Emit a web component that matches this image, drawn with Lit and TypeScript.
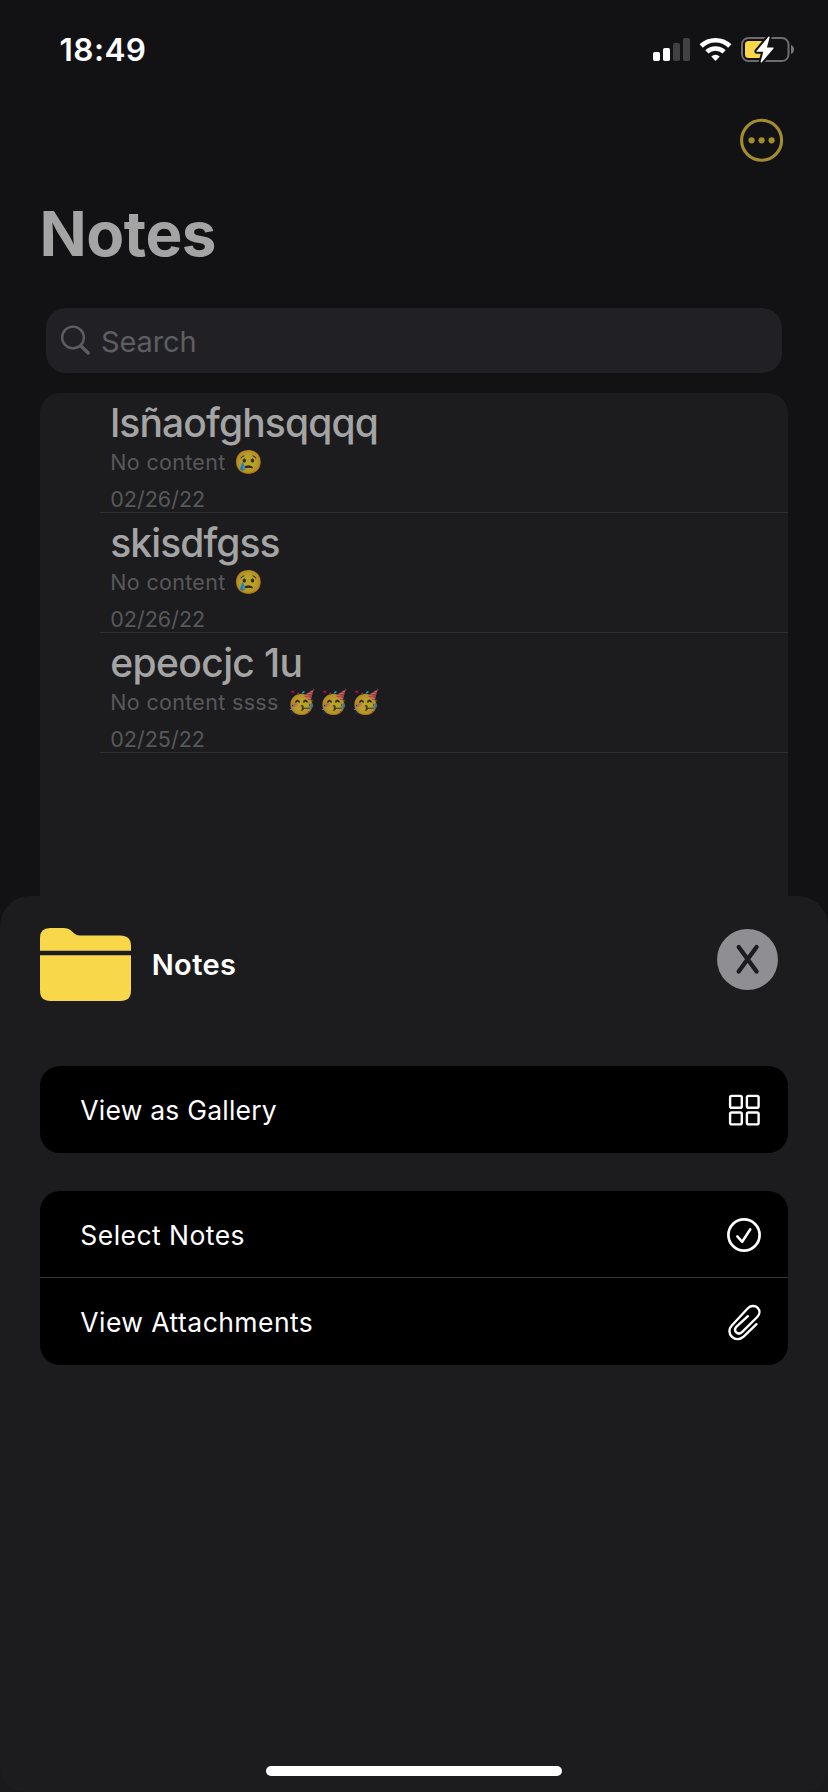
import { LitElement, html, css, svg } from "lit";
import { customElement } from "lit/decorators.js";

interface Note {
  title: string;
  spacing: number;
  content: string;
  emoji: string[];
  date: string;
}

const NOTES: Note[] = [
  { title: "lsñaofghsqqqq", spacing: -0.85, content: "No content", emoji: ["😢"], date: "02/26/22" },
  { title: "skisdfgss", spacing: -0.93, content: "No content", emoji: ["😢"], date: "02/26/22" },
  { title: "epeocjc 1u", spacing: -0.63, content: "No content ssss", emoji: ["🥳", "🥳", "🥳"], date: "02/25/22" },
];

@customElement("status-bar")
class StatusBar extends LitElement {
  static styles = css`
    :host { display: flex; justify-content: space-between; align-items: flex-start; height: 80px; padding: 0 33px 0 59.5px; box-sizing: border-box; }
    .time { font-size: 31.5px; font-weight: 600; letter-spacing: 0.45px; line-height: 39px; padding-top: 30px; color: #fff; }
    .icons { display: block; margin-top: 34px; }
  `;
  render() {
    return html`
      <div class="time">18:49</div>
      <svg class="icons" width="143" height="31" viewBox="652 34 143 31">
        <rect x="653" y="52" width="7" height="9" rx="1.8" fill="#fff" />
        <rect x="663" y="48" width="7" height="13" rx="1.8" fill="#fff" />
        <rect x="673" y="43" width="7" height="18" rx="1.8" fill="#414143" />
        <rect x="683" y="38" width="7" height="23" rx="1.8" fill="#414143" />
        <g fill="none" stroke="#fff" stroke-width="4.6">
          <path d="M701.2 46 A20.6 20.6 0 0 1 729.8 46" />
          <path d="M706.9 51.9 A12.4 12.4 0 0 1 724.1 51.9" />
        </g>
        <path d="M711.3 56.4 A6 6 0 0 1 719.7 56.4 L715.5 60.9 Z" fill="#fff" />
        <rect x="742" y="38" width="46.5" height="23" rx="6.5" fill="none" stroke="#6c6c6e" stroke-width="2" />
        <path d="M791 45 Q794 46.4 794 49.5 Q794 52.6 791 54 Z" fill="#77777a" />
        <rect x="745" y="41" width="19" height="17" rx="3.5" fill="#f8d74a" />
        <path d="M768.6 36.6 L756.6 50.9 Q756 51.8 757 51.8 L763.3 51.8 L760.6 61.8 Q760.8 62.8 761.8 62.2 L773.5 48.4 Q774 47.4 773 47.4 L766.9 47.4 L769.6 37.4 Q769.4 36.2 768.6 36.6 Z"
          fill="#fff" stroke="#121214" stroke-width="4" stroke-linejoin="round" paint-order="stroke" />
      </svg>
    `;
  }
}

@customElement("note-row")
class NoteRow extends LitElement {
  static properties = { note: { attribute: false } };
  declare note: Note;
  static styles = css`
    :host { display: block; height: 120px; box-sizing: border-box; margin-left: 60px; padding: 6px 0 0 10.3px; border-bottom: 1px solid #2d2d2f; white-space: nowrap; }
    .title { font-size: 39px; font-weight: 500; line-height: 48px; color: #a4a4a4; }
    .content { display: flex; height: 30px; align-items: center; font-size: 21.5px; letter-spacing: 0.32px; line-height: 30px; color: #58585a; }
    .emoji { width: 32px; font-size: 23.2px; letter-spacing: 0; opacity: 0.69; display: flex; justify-content: center; }
    .faces { display: flex; margin-left: 6.5px; }
    .date { margin-top: 10px; font-size: 21.5px; line-height: 25px; color: #58585a; }
  `;
  render() {
    const n = this.note;
    return html`
      <div class="title" style="letter-spacing:${n.spacing}px">${n.title}</div>
      <div class="content">${n.content}<span class="faces">${n.emoji.map((e) => html`<span class="emoji">${e}</span>`)}</span></div>
      <div class="date">${n.date}</div>
    `;
  }
}

const grid = svg`
  <g fill="none" stroke="#fff" stroke-width="2.4">
    <rect x="730.1" y="1095.4" width="11.7" height="11.9" rx="1.6" />
    <rect x="746.9" y="1095.4" width="11.7" height="11.9" rx="1.6" />
    <rect x="730.1" y="1112" width="11.7" height="11.9" rx="1.6" />
    <rect x="746.9" y="1112" width="11.7" height="11.9" rx="1.6" />
  </g>`;

@customElement("action-sheet")
class ActionSheet extends LitElement {
  static styles = css`
    :host { display: block; height: 896px; box-sizing: border-box; padding: 32px 40px 0; border-radius: 30px 30px 24px 24px; background: #1c1c1e; }
    .head { display: flex; align-items: center; height: 73px; }
    .name { flex: 1; padding-left: 20.7px; font-size: 29px; font-weight: 600; letter-spacing: 0.4px; line-height: 36px; color: #fff; }
    .folder, .close, .icon { display: block; }
    .close { margin: 0 10px 10px 0; }
    .card { border-radius: 20px; background: #000; }
    .first { margin-top: 65px; }
    .second { margin-top: 38px; }
    .row { display: flex; justify-content: space-between; align-items: center; height: 87px; padding: 0 26px 0 40.3px; box-sizing: border-box; }
    .row.top { height: 86px; }
    .rule { height: 1px; background: #353537; }
    .label { font-size: 26.5px; letter-spacing: 0.45px; line-height: 34px; color: #fff; }
    .top .label { padding-top: 2px; }
    .tight { letter-spacing: 0.22px; }
    .home { width: 296px; height: 10px; margin: 401px auto 0; border-radius: 5px; background: #fff; }
  `;
  render() {
    return html`
      <div class="head">
        <svg class="folder" width="91" height="73" viewBox="0 0 91 73" fill="#f8d74a">
          <path d="M0 22.8 V10 Q0 0 10 0 H23.5 Q28.5 0 31.8 3.2 L34 5.3 Q36.4 7.6 39.5 7.6 H80 Q91 7.6 91 18 V22.8 Z" />
          <path d="M0 27.3 H91 V62.5 Q91 73 80.5 73 H10.5 Q0 73 0 62.5 Z" />
        </svg>
        <div class="name">Notes</div>
        <svg class="close" width="61" height="61" viewBox="0 0 61 61">
          <circle cx="30.5" cy="30.5" r="30.5" fill="#8e8e93" />
          <path d="M21.7 18.1 L39.6 42.6 M39.6 18.1 L21.7 42.6" stroke="#1c1c1e" stroke-width="4.3" stroke-linecap="round" />
        </svg>
      </div>
      <div class="card first">
        <div class="row"><span class="label tight">View as Gallery</span>
          <svg class="icon" width="36" height="40" viewBox="726 1089.5 36 40">${grid}</svg>
        </div>
      </div>
      <div class="card second">
        <div class="row top"><span class="label">Select Notes</span>
          <svg class="icon" width="36" height="40" viewBox="726 1214 36 40" fill="none" stroke="#fff" stroke-linecap="round" stroke-linejoin="round">
            <circle cx="744" cy="1235" r="15.6" stroke-width="2.7" />
            <path d="M737.3 1236.4 L742.2 1241.8 L750.3 1229.2" stroke-width="2.5" />
          </svg>
        </div>
        <div class="rule"></div>
        <div class="row"><span class="label">View Attachments</span>
          <svg class="icon" width="36" height="40" viewBox="726 1301.5 36 40" fill="none" stroke="#fff" stroke-width="2.4" stroke-linecap="round" stroke-linejoin="round">
            <path d="M756.5 1323.7 L743.6 1336.2 C740 1339.5 735.2 1339.4 732 1336.4 C728.6 1333.2 728.6 1328.4 731.8 1325 L747.6 1308 C750.4 1305 755 1304.6 757.7 1307.3 C760.2 1309.9 759.9 1313.7 757.2 1316.5 L742.3 1331.4 C740.4 1333.3 737.9 1333.4 736.3 1331.9 C734.7 1330.3 734.8 1327.9 736.5 1326.1 L747.9 1315.7" />
          </svg>
        </div>
      </div>
      <div class="home"></div>
    `;
  }
}

@customElement("app-root")
class AppRoot extends LitElement {
  static styles = css`
    :host { display: flex; flex-direction: column; width: 828px; height: 1792px; overflow: hidden; background: #121214; font-family: Inter, "Noto Sans", sans-serif; }
    .bar { display: flex; justify-content: flex-end; height: 120px; padding: 38px 44px 0 0; box-sizing: border-box; }
    .heading { margin: 0; padding-left: 39.5px; height: 108px; font-size: 62px; font-weight: 700; line-height: 67px; letter-spacing: -0.5px; color: #a4a4a4; }
    .search { display: flex; align-items: center; height: 65px; margin: 0 46px; padding-left: 14px; box-sizing: border-box; border-radius: 20px; background: #212125; }
    .glass { display: block; margin-bottom: 2px; }
    .hint { padding: 2px 0 0 10px; font-size: 29px; letter-spacing: -0.1px; line-height: 36px; color: #5e5e62; }
    .list { height: 503px; box-sizing: border-box; margin: 20px 40px 0; border-radius: 20px 20px 0 0; background: #1c1c1e; }
    .base { background: linear-gradient(#121214 50%, #1a1a1b 50%); }
  `;
  render() {
    return html`
      <status-bar></status-bar>
      <div class="bar">
        <svg width="45" height="45" viewBox="739 118 45 45">
          <circle cx="761.6" cy="140.3" r="20" fill="none" stroke="#a38d2e" stroke-width="3.1" />
          <circle cx="751.6" cy="140.3" r="3.1" fill="#a38d2e" />
          <circle cx="761.6" cy="140.3" r="3.1" fill="#a38d2e" />
          <circle cx="771.6" cy="140.3" r="3.1" fill="#a38d2e" />
        </svg>
      </div>
      <h1 class="heading">Notes</h1>
      <div class="search">
        <svg class="glass" width="31" height="32" viewBox="60 323.5 31 32" fill="none" stroke="#5e5e62" stroke-linecap="round">
          <circle cx="73" cy="337" r="10.9" stroke-width="2.4" />
          <path d="M81 345.5 L88.2 352.4" stroke-width="3.4" />
        </svg>
        <span class="hint">Search</span>
      </div>
      <div class="list">${NOTES.map((n) => html`<note-row .note=${n}></note-row>`)}</div>
      <div class="base"><action-sheet></action-sheet></div>
    `;
  }
}
